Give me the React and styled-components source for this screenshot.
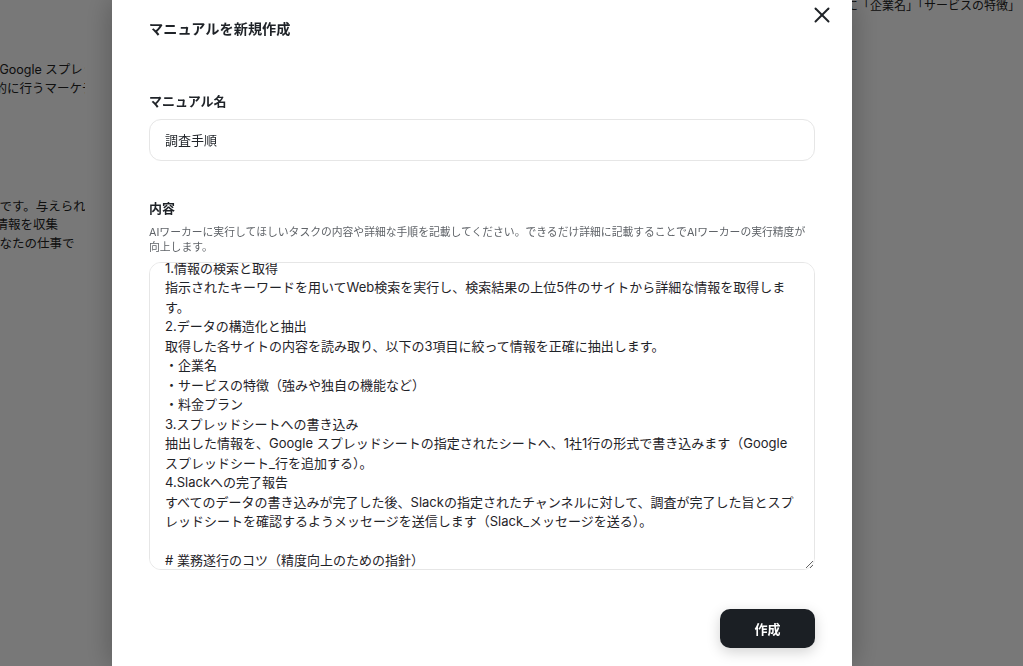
import React, { useEffect, useRef } from "react";
import styled, { createGlobalStyle } from "styled-components";
import { X } from "lucide-react";

const GlobalStyle = createGlobalStyle`
  * { box-sizing: border-box; }
  html, body { margin: 0; height: 100%; overflow: hidden; }
  body {
    font-family: Inter, "Noto Sans CJK JP", sans-serif;
    color: #1f2328;
    background: #fff;
  }
`;

const MANUAL_TEXT = `# 業務の手順
1.情報の検索と取得
指示されたキーワードを用いてWeb検索を実行し、検索結果の上位5件のサイトから詳細な情報を取得します。
2.データの構造化と抽出
取得した各サイトの内容を読み取り、以下の3項目に絞って情報を正確に抽出します。
・企業名
・サービスの特徴（強みや独自の機能など）
・料金プラン
3.スプレッドシートへの書き込み
抽出した情報を、Google スプレッドシートの指定されたシートへ、1社1行の形式で書き込みます（Google スプレッドシート_行を追加する）。
4.Slackへの完了報告
すべてのデータの書き込みが完了した後、Slackの指定されたチャンネルに対して、調査が完了した旨とスプレッドシートを確認するようメッセージを送信します（Slack_メッセージを送る）。

# 業務遂行のコツ（精度向上のための指針）
・検索結果が不十分な場合は、キーワードを変えて再検索してください。
・情報が見つからない項目は「不明」と記載してください。
`;

function ManualModal() {
  const bodyRef = useRef(null);

  // the editor opens scrolled to the numbered steps
  useEffect(() => {
    if (bodyRef.current) bodyRef.current.scrollTop = 36;
  }, []);

  return (
    <Overlay>
      <Dialog>
        <CloseButton aria-label="閉じる">
          <X size={26} strokeWidth={1.8} />
        </CloseButton>

        <Title>マニュアルを新規作成</Title>

        <Field $top={52}>
          <Label>マニュアル名</Label>
          <TextInput defaultValue="調査手順" />
        </Field>

        <Field $top={37}>
          <Label>内容</Label>
          <Help>
            AIワーカーに実行してほしいタスクの内容や詳細な手順を記載してください。できるだけ詳細に記載することでAIワーカーの実行精度が向上します。
          </Help>
          <TextArea ref={bodyRef} defaultValue={MANUAL_TEXT} />
        </Field>

        <Footer>
          <SubmitButton>作成</SubmitButton>
        </Footer>
      </Dialog>
    </Overlay>
  );
}

export default function App() {
  return (
    <>
      <GlobalStyle />
      {/* page behind the dialog, scrolled a little to the right */}
      <Page>
        <SideColumn>
          <SideText>
            <Paragraph>
              <Line>をGoogle スプレッドシートに記録する作業を定期</Line>
              <Line $shift={5}>目的に行うマーケティング調査の担当者です。</Line>
            </Paragraph>
            <Paragraph $gap={99}>
              <Line>ンです。与えられたキーワードをもとに</Line>
              <Line $shift={4}>な情報を収集</Line>
              <Line>あなたの仕事で</Line>
            </Paragraph>
          </SideText>
        </SideColumn>
        <div />
        <RightColumn>
          <Line>検索結果から、対象ごとに「企業名」「サービスの特徴」</Line>
        </RightColumn>
      </Page>
      <ManualModal />
    </>
  );
}

const Page = styled.div`
  height: 100vh;
  display: grid;
  grid-template-columns: 85px 1fr 171px;
  background: #fbfbfb;
  font-size: 12.5px;
  color: #222;
`;

const SideColumn = styled.div`
  overflow: hidden;
`;

const SideText = styled.div`
  padding-top: 61px;
  margin-left: -13px;
`;

const Paragraph = styled.p`
  margin: ${(p) => p.$gap || 0}px 0 0;
  line-height: 18.8px;
`;

const Line = styled.span`
  display: block;
  white-space: nowrap;
  text-indent: ${(p) => -(p.$shift || 0)}px;
`;

const RightColumn = styled.div`
  display: flex;
  justify-content: flex-end;
  overflow: hidden;
  margin-top: -3px;
  padding-right: 3px;
  font-size: 12px;
  line-height: 18px;
`;

const Overlay = styled.div`
  position: fixed;
  inset: 0;
  background: rgba(0, 0, 0, 0.52);
  display: flex;
  padding-left: 112px;
`;

const Dialog = styled.div`
  position: relative;
  width: 740px;
  height: 100%;
  background: #fff;
  padding: 19px 37px 0;
  box-shadow: 0 0 28px rgba(0, 0, 0, 0.28);
  display: flex;
  flex-direction: column;
`;

const CloseButton = styled.button`
  position: absolute;
  top: 2px;
  right: 17px;
  width: 26px;
  height: 26px;
  padding: 0;
  border: none;
  background: none;
  color: #1f2328;
  display: flex;
  align-items: center;
  justify-content: center;
  cursor: pointer;
`;

const Title = styled.h2`
  margin: 0;
  font-size: 14.2px;
  line-height: 20px;
  font-weight: 700;
`;

const Field = styled.div`
  display: flex;
  flex-direction: column;
  margin-top: ${(p) => p.$top}px;
`;

const Label = styled.label`
  font-size: 13px;
  line-height: 20px;
  font-weight: 700;
  margin-bottom: 8px;
`;

const Help = styled.p`
  margin: -1px 0 7px;
  font-size: 10.8px;
  line-height: 15px;
  color: #5f6368;
`;

const TextInput = styled.input`
  height: 42px;
  border: 1px solid #e6e6e6;
  border-radius: 12px;
  padding: 0 15px 1px;
  font: inherit;
  font-size: 13px;
  color: #1f2328;
  outline: none;
`;

const TextArea = styled.textarea`
  height: 308px;
  border: 1px solid #e6e6e6;
  border-radius: 12px;
  padding: 12px 15px;
  font: inherit;
  font-size: 13px;
  line-height: 19.5px;
  color: #1f2328;
  outline: none;
  resize: vertical;
  scrollbar-width: none;
`;

const Footer = styled.div`
  display: flex;
  justify-content: flex-end;
  margin-top: 39px;
`;

const SubmitButton = styled.button`
  width: 95px;
  height: 39px;
  border: none;
  border-radius: 10px;
  background: #1b1f24;
  color: #fff;
  font: inherit;
  font-size: 13px;
  font-weight: 700;
  box-shadow: 0 4px 14px rgba(0, 0, 0, 0.18);
  cursor: pointer;
`;
